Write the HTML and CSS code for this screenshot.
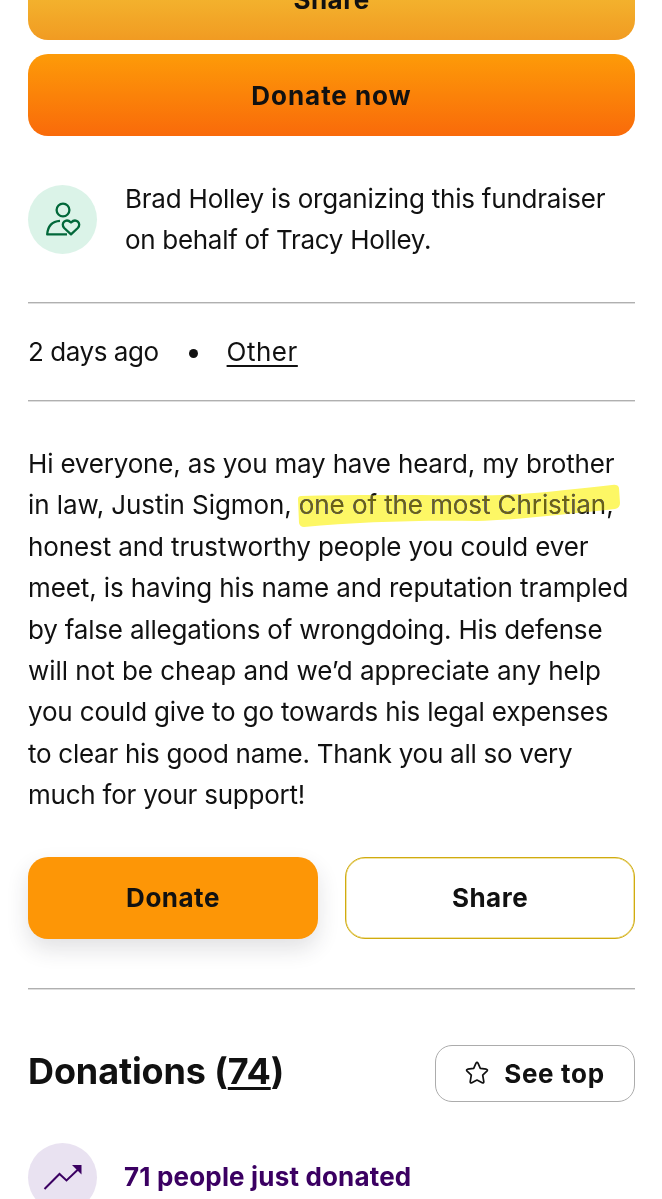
FILE: index.html
```
<!DOCTYPE html>
<html lang="en">
<head>
    <meta charset="UTF-8">
    <meta name="viewport" content="width=device-width, initial-scale=1.0">
    <title>Fundraiser</title>
    <link rel="stylesheet" href="styles.css">
</head>
<body>

    <main class="page">
        <div class="cta">
            <button class="button button-share-top">Share</button>
            <button class="button button-donate-now">Donate now</button>
        </div>

        <section class="organizer">
            <div class="badge badge-green">
                <svg width="34" height="34" viewBox="0 0 34 34" fill="none" stroke="#02683a" stroke-width="2.300" stroke-linejoin="round">
                    <circle cx="17" cy="8" r="6.400"/>
                    <path d="M14 18.800C6.500 19.300 1.800 24 1.200 32.300H21"/>
                    <path d="M25 32.300L18.200 26C14 21.500 20 15.500 25 20.500C30 15.500 36 21.500 31.800 26Z"/>
                </svg>
            </div>
            <p class="organizer-text"><span class="org-1">Brad Holley is organizing this fundraiser</span><br><span class="org-2">on behalf of Tracy Holley.</span></p>
        </section>

        <section class="meta">
            <span class="meta-date">2 days ago</span>
            <span class="dot"></span>
            <a href="#" class="meta-link">Other</a>
        </section>

        <p class="story">
            <span class="line line-1">Hi everyone, as you may have heard, my brother</span>
            <span class="line line-2">in law, Justin Sigmon, <span class="marked">one of the most Christian,<svg class="marker" width="324" height="46" viewBox="0 0 324 46"><path class="marker-ink" d="M4 12C70 10 150 12 205 11C250 9 285 4 315 1Q321 0 322 4L323 19Q323 24 318 25C270 30 220 36 180 37C120 36 60 38 7 43Q3 43 2 39L1 15Q1 12 4 12Z"/><path class="marker-paper" d="M4 12C70 10 150 12 205 11C250 9 285 4 315 1Q321 0 322 4L323 19Q323 24 318 25C270 30 220 36 180 37C120 36 60 38 7 43Q3 43 2 39L1 15Q1 12 4 12Z"/></svg></span></span>
            <span class="line line-3">honest and trustworthy people you could ever</span>
            <span class="line line-4">meet, is having his name and reputation trampled</span>
            <span class="line line-5">by false allegations of wrongdoing. His defense</span>
            <span class="line line-6">will not be cheap and we’d appreciate any help</span>
            <span class="line line-7">you could give to go towards his legal expenses</span>
            <span class="line line-8">to clear his good name. Thank you all so very</span>
            <span class="line line-9">much for your support!</span>
        </p>

        <div class="actions">
            <button class="button button-donate">Donate</button>
            <button class="button button-share">Share</button>
        </div>

        <section class="donations">
            <div class="donations-header">
                <h2>Donations (<a href="#">74</a>)</h2>
                <button class="see-top">
                    <svg width="24" height="24" viewBox="0 0 24 24" fill="none" stroke="#111" stroke-width="1.700" stroke-linejoin="round">
                        <path d="M11 2.200Q12 0.500 13 2.200L15.300 7.400L21.300 8.200Q23.200 8.700 21.900 10.200L17.700 14.200L18.800 20.600Q18.900 22.400 17.200 21.700L12 19L6.800 21.700Q5.100 22.400 5.200 20.600L6.300 14.200L2.100 10.200Q0.800 8.700 2.700 8.200L8.700 7.400Z"/>
                    </svg>
                    <span>See top</span>
                </button>
            </div>
            <div class="recent">
                <div class="badge badge-purple">
                    <svg width="40" height="28" viewBox="0 0 40 28" fill="none" stroke="#3b0062" stroke-width="2">
                        <path d="M1.500 26L16.500 11L23.500 17.500L35 6.500"/>
                        <path d="M29 2H38.500V11.500Z" fill="#3b0062" stroke="none"/>
                    </svg>
                </div>
                <span class="recent-text">71 people just donated</span>
            </div>
        </section>
    </main>

</body>
</html>
```

FILE: styles.css
```
* {
    margin: 0;
    padding: 0;
    box-sizing: border-box;
}

body {
    height: 1199px;
    background-color: #fff;
    font-family: Inter, 'Liberation Sans', sans-serif;
    font-size: 26px;
    line-height: 41.4px;
    color: #111;
    overflow: hidden;
}

a {
    color: inherit;
}

svg {
    overflow: visible;
}

.page {
    height: 1199px;
    padding: 0 27px 0 28px;
    overflow: hidden;
}

.button {
    height: 82px;
    border: none;
    border-radius: 20px;
    font-family: inherit;
    font-size: 26px;
    font-weight: 700;
    letter-spacing: 0.5px;
    color: #111;
    white-space: nowrap;
}

.cta {
    display: flex;
    flex-direction: column;
    gap: 14px;
    margin-top: -42px;
}

.button-share-top {
    background: linear-gradient(#f5c838, #f19b22);
}

.button-donate-now {
    background: linear-gradient(#fd9b08, #f96a0a);
    letter-spacing: 0.95px;
}

.organizer {
    display: flex;
    align-items: center;
    gap: 28px;
    height: 167px;
    border-bottom: 1px solid #b0b0b0;
    box-shadow: 0 1px #dedede;
    white-space: nowrap;
}

.org-1 {
    letter-spacing: -0.22px;
}

.org-2 {
    letter-spacing: -0.31px;
}

.badge {
    display: flex;
    flex: none;
    align-items: center;
    justify-content: center;
    width: 69px;
    height: 69px;
    border-radius: 50%;
}

.badge-green {
    background: #dbf3e8;
}

.badge-purple {
    background: #e9e2f1;
}

.meta {
    display: flex;
    align-items: center;
    height: 98px;
    border-bottom: 1px solid #b0b0b0;
    box-shadow: 0 1px #dedede;
}

.meta-date {
    letter-spacing: -0.45px;
}

.dot {
    width: 9px;
    height: 9px;
    margin: 3px 29px 0 30px;
    border-radius: 50%;
    background: #111;
}

.meta-link {
    letter-spacing: 0.5px;
    text-decoration-thickness: 2px;
    text-underline-offset: 4px;
}

.story {
    margin-top: 42px;
    white-space: nowrap;
}

.line {
    display: block;
    width: max-content;
}

.line-1 {
    letter-spacing: -0.18px;
}

.line-2 {
    letter-spacing: -0.09px;
}

.line-3 {
    letter-spacing: -0.11px;
}

.line-4 {
    letter-spacing: -0.1px;
}

.line-5 {
    letter-spacing: -0.19px;
}

.line-6 {
    letter-spacing: -0.04px;
}

.line-7 {
    letter-spacing: -0.17px;
}

.line-8 {
    letter-spacing: -0.27px;
}

.line-9 {
    letter-spacing: -0.23px;
}

/* Highlighter stroke over the text */
.marked {
    position: relative;
}

.marker {
    position: absolute;
    top: -5px;
    left: -2px;
}

.marker-ink {
    fill: #6b6200;
    mix-blend-mode: lighten;
}

.marker-paper {
    fill: #fdf765;
    mix-blend-mode: darken;
}

.actions {
    display: grid;
    grid-template-columns: 1fr 1fr;
    gap: 27px;
    margin-top: 41px;
    padding-bottom: 49px;
    border-bottom: 1px solid #b0b0b0;
    box-shadow: 0 1px #dedede;
}

.button-donate {
    background: #fd9606;
    box-shadow: 0 10px 22px rgba(40, 40, 60, 0.14);
}

.button-share {
    background: #fff;
    border: 1px solid #d0ab10;
    box-shadow: inset 0 0 0 0.5px #e5c94a;
}

.donations-header {
    display: flex;
    align-items: center;
    justify-content: space-between;
    margin-top: 56px;
}

h2 {
    margin-top: -2px;
    font-size: 36px;
    font-weight: 700;
    letter-spacing: -0.12px;
    white-space: nowrap;
}

h2 a {
    text-decoration-thickness: 3px;
    text-underline-offset: 3px;
    text-decoration-skip-ink: none;
}

.see-top {
    display: flex;
    align-items: center;
    justify-content: center;
    gap: 15px;
    width: 200px;
    height: 57px;
    border: 1px solid #acacac;
    border-radius: 17px;
    background: #fff;
    font-family: inherit;
    font-size: 26px;
    font-weight: 700;
    letter-spacing: 0.7px;
    color: #111;
    white-space: nowrap;
}

.recent {
    display: flex;
    align-items: center;
    gap: 27px;
    margin-top: 41px;
    font-weight: 700;
    letter-spacing: 0.17px;
    color: #3b0062;
    white-space: nowrap;
}
```
